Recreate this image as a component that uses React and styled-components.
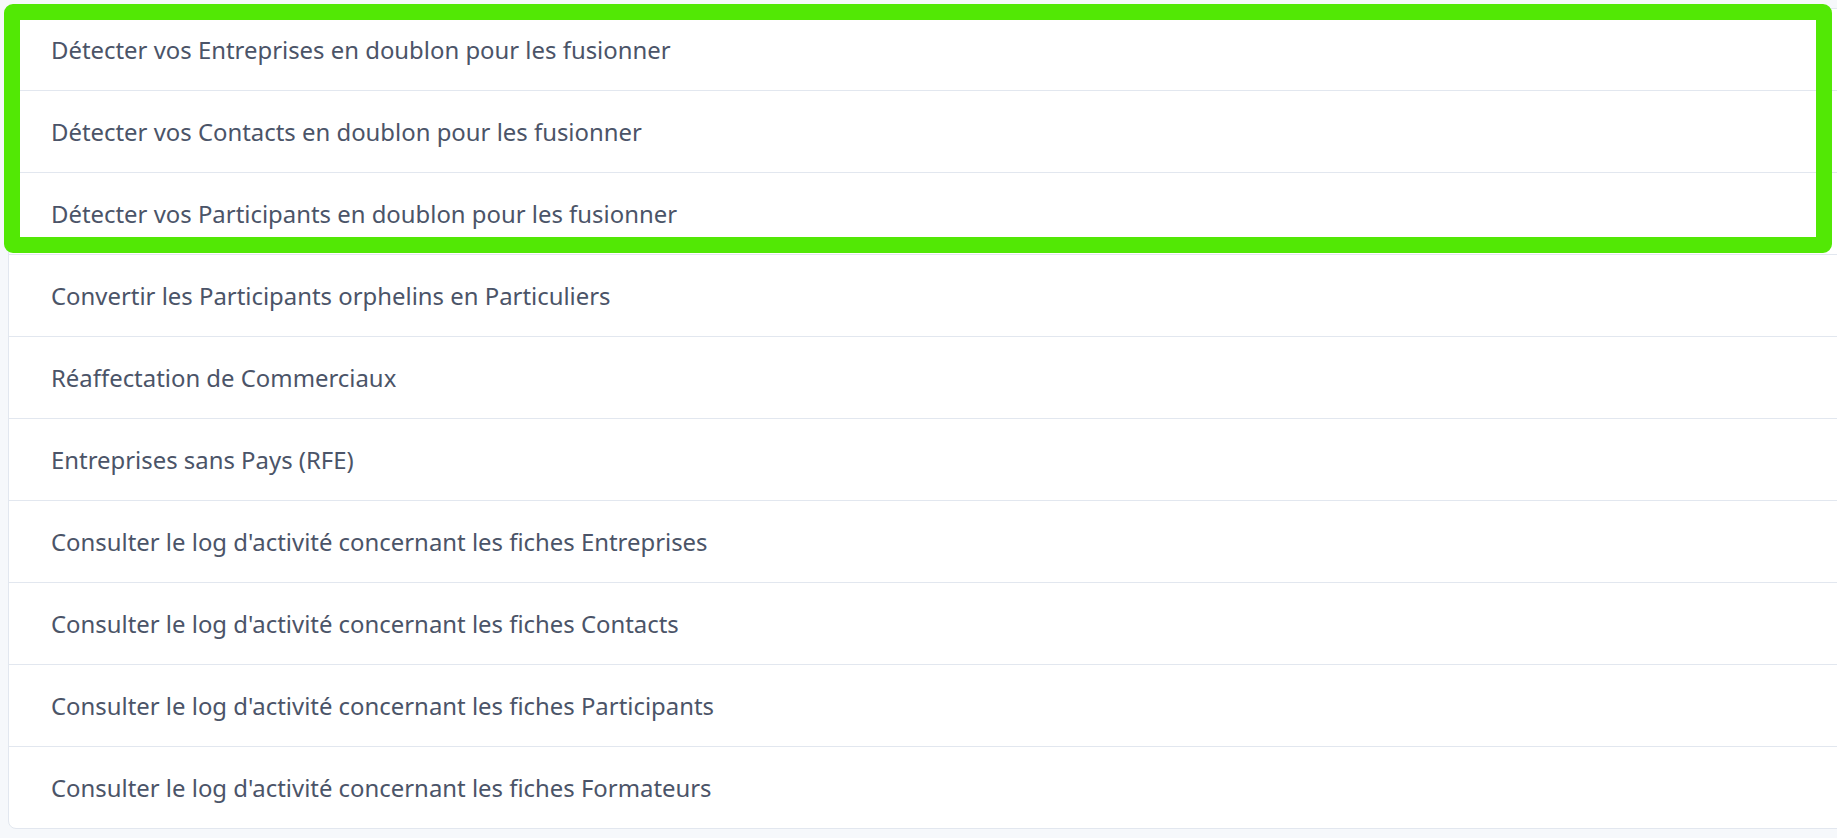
import React from 'react';
import styled, { createGlobalStyle } from 'styled-components';

const items = [
	"Détecter vos Entreprises en doublon pour les fusionner",
	"Détecter vos Contacts en doublon pour les fusionner",
	"Détecter vos Participants en doublon pour les fusionner",
	"Convertir les Participants orphelins en Particuliers",
	"Réaffectation de Commerciaux",
	"Entreprises sans Pays (RFE)",
	"Consulter le log d'activité concernant les fiches Entreprises",
	"Consulter le log d'activité concernant les fiches Contacts",
	"Consulter le log d'activité concernant les fiches Participants",
	"Consulter le log d'activité concernant les fiches Formateurs",
];

const GlobalStyle = createGlobalStyle`
	html, body {
		margin: 0;
		padding: 0;
		background: #f6f8fb;
		overflow: hidden;
	}
`;

export default function App() {
	return (
		<Page>
			<GlobalStyle />
			<Card>
				{items.map((label) => (
					<Row key={label}>
						<Label>{label}</Label>
					</Row>
				))}
			</Card>
			<Highlight />
		</Page>
	);
}

const Page = styled.div`
	position: relative;
	padding: 8px 0 0 8px;
	width: 1837px;
	height: 838px;
	box-sizing: border-box;
	font-family: 'Noto Sans', 'Open Sans', sans-serif;
`;

const Card = styled.ul`
	list-style: none;
	margin: 0;
	padding: 0;
	width: 1840px;
	background: #fff;
	border: 1px solid #e2e7ef;
	border-radius: 8px;
	overflow: hidden;
`;

const Row = styled.li`
	display: flex;
	align-items: center;
	height: 81px;
	padding-left: 42px;
	border-bottom: 1px solid #e2e7ef;
	&:last-child {
		border-bottom: none;
	}
`;

const Label = styled.span`
	font-size: 23.9px;
	color: #4b5468;
	letter-spacing: 0;
`;

const Highlight = styled.div`
	position: absolute;
	left: 4px;
	top: 4px;
	width: 1828px;
	height: 249px;
	box-sizing: border-box;
	border: 16px solid #52e805;
	border-radius: 9px;
	pointer-events: none;
`;
